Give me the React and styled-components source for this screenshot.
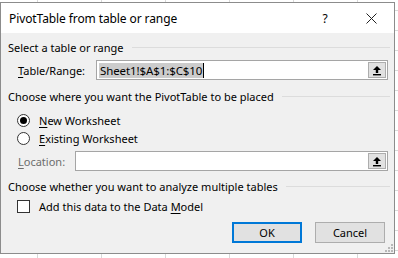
import React from "react";
import styled, { createGlobalStyle } from "styled-components";

const Global = createGlobalStyle`
  html, body { margin: 0; padding: 0; }
  body {
    width: 398px;
    height: 258px;
    overflow: hidden;
    background-color: #ffffff;
    background-image:
      linear-gradient(to right, #d9d9d9 1px, transparent 1px),
      linear-gradient(to bottom, #d9d9d9 1px, transparent 1px);
    background-size: 64px 20px;
    background-position: 37px 10px;
    font-family: "Noto Sans", "Segoe UI", sans-serif;
  }
`;

const Dialog = styled.div`
  margin-top: 2px;
  width: 393px;
  height: 250px;
  border: 1px solid #8c8c8c;
  background: #f0f0f0;
  display: flex;
  flex-direction: column;
  position: relative;
  font-size: 11px;
  color: #000;
`;

const TitleBar = styled.div`
  height: 30px;
  background: #ffffff;
  display: flex;
  align-items: center;
  padding-left: 8px;
`;

const Title = styled.div`
  flex: 1;
  font-size: 12px;
  letter-spacing: -0.1px;
`;

const TitleBtn = styled.div`
  width: 46px;
  height: 30px;
  display: flex;
  align-items: center;
  justify-content: center;
  font-size: 12px;
`;

const Body = styled.div`
  display: flex;
  flex-direction: column;
  padding: 0 4px 0 7px;
`;

const GroupHeader = styled.div`
  display: flex;
  align-items: center;
  height: 16px;
  margin-top: ${(p) => p.$mt}px;
  white-space: nowrap;
  &::after {
    content: "";
    flex: 1;
    height: 1px;
    background: #dcdcdc;
    margin-left: 8px;
  }
`;

const FieldRow = styled.div`
  display: flex;
  align-items: center;
  height: 20px;
  margin-top: ${(p) => p.$mt}px;
  padding-left: 10px;
`;

const Label = styled.div`
  width: ${(p) => p.$w}px;
  color: ${(p) => (p.$disabled ? "#6d6d6d" : "#000")};
  white-space: nowrap;
`;

const U = styled.span`
  text-decoration: underline;
  text-underline-offset: 2px;
`;

const InputBox = styled.div`
  flex: 1;
  margin-right: 2px;
  height: 20px;
  box-sizing: border-box;
  border: 1px solid #a5a5a5;
  background: #fff;
  display: flex;
  align-items: center;
  padding: 0 1px 0 2px;
`;

const Selected = styled.span`
  background: #cccccc;
  padding: 0 1px;
  line-height: 15px;
  font-size: 11.5px;
  letter-spacing: -0.1px;
  border-right: 1px solid #000;
`;

const Spacer = styled.div`
  flex: 1;
`;

const RefButton = styled.div`
  width: 18px;
  height: 16px;
  box-sizing: border-box;
  border: 1px solid #adadad;
  background: #e1e1e1;
  display: flex;
  align-items: center;
  justify-content: center;
`;

const OptionRow = styled.div`
  display: flex;
  align-items: center;
  height: 18px;
  margin-top: ${(p) => p.$mt}px;
  padding-left: 9px;
  gap: 9px;
`;

const Radio = styled.div`
  width: 13px;
  height: 13px;
  box-sizing: border-box;
  border-radius: 50%;
  border: 1px solid #333;
  background: #fff;
  display: flex;
  align-items: center;
  justify-content: center;
  &::after {
    content: "";
    width: 7px;
    height: 7px;
    border-radius: 50%;
    background: ${(p) => (p.$checked ? "#000" : "transparent")};
  }
`;

const Check = styled.div`
  width: 13px;
  height: 13px;
  box-sizing: border-box;
  border: 1px solid #333;
  background: #fff;
`;

const ButtonRow = styled.div`
  display: flex;
  justify-content: flex-end;
  gap: 13px;
  margin-top: ${(p) => p.$mt}px;
  padding-right: 5px;
`;

const Button = styled.div`
  width: 70px;
  height: 21px;
  box-sizing: border-box;
  border: ${(p) => (p.$default ? "2px solid #0078d7" : "1px solid #adadad")};
  background: #e1e1e1;
  display: flex;
  align-items: center;
  justify-content: center;
`;

const Grip = styled.svg`
  position: absolute;
  right: 1px;
  bottom: 1px;
`;

const RefIcon = () => (
  <svg width="10" height="11" viewBox="0 0 10 11">
    <path d="M5 1 L9 5 L6.2 5 L6.2 8 L3.8 8 L3.8 5 L1 5 Z" fill="#000" />
    <rect x="1" y="9" width="8" height="1.4" fill="#000" />
  </svg>
);

export default function App() {
  return (
    <>
      <Global />
      <Dialog>
        <TitleBar>
          <Title>PivotTable from table or range</Title>
          <TitleBtn>?</TitleBtn>
          <TitleBtn>
            <svg width="11" height="11" viewBox="0 0 11 11">
              <path d="M0.5 0.5 L10.5 10.5 M10.5 0.5 L0.5 10.5" stroke="#222" strokeWidth="1" />
            </svg>
          </TitleBtn>
        </TitleBar>
        <Body>
          <GroupHeader $mt={6}>Select a table or range</GroupHeader>
          <FieldRow $mt={5}>
            <Label $w={78}>
              <U>T</U>able/Range:
            </Label>
            <InputBox>
              <Selected>Sheet1!$A$1:$C$10</Selected>
              <Spacer />
              <RefButton>
                <RefIcon />
              </RefButton>
            </InputBox>
          </FieldRow>
          <GroupHeader $mt={8}>Choose where you want the PivotTable to be placed</GroupHeader>
          <OptionRow $mt={7}>
            <Radio $checked />
            <span>
              <U>N</U>ew Worksheet
            </span>
          </OptionRow>
          <OptionRow $mt={0}>
            <Radio />
            <span>
              <U>E</U>xisting Worksheet
            </span>
          </OptionRow>
          <FieldRow $mt={4}>
            <Label $w={57} $disabled>
              <U>L</U>ocation:
            </Label>
            <InputBox>
              <Spacer />
              <RefButton>
                <RefIcon />
              </RefButton>
            </InputBox>
          </FieldRow>
          <GroupHeader $mt={7}>Choose whether you want to analyze multiple tables</GroupHeader>
          <OptionRow $mt={3}>
            <Check />
            <span>
              Add this data to the Data <U>M</U>odel
            </span>
          </OptionRow>
          <ButtonRow $mt={7}>
            <Button $default>OK</Button>
            <Button>Cancel</Button>
          </ButtonRow>
        </Body>
        <Grip width="8" height="8" viewBox="0 0 8 8">
          {[
            [6, 0],
            [6, 3],
            [3, 3],
            [6, 6],
            [3, 6],
            [0, 6],
          ].map(([x, y], i) => (
            <rect key={i} x={x} y={y} width="2" height="2" fill="#b8b8b8" />
          ))}
        </Grip>
      </Dialog>
    </>
  );
}
